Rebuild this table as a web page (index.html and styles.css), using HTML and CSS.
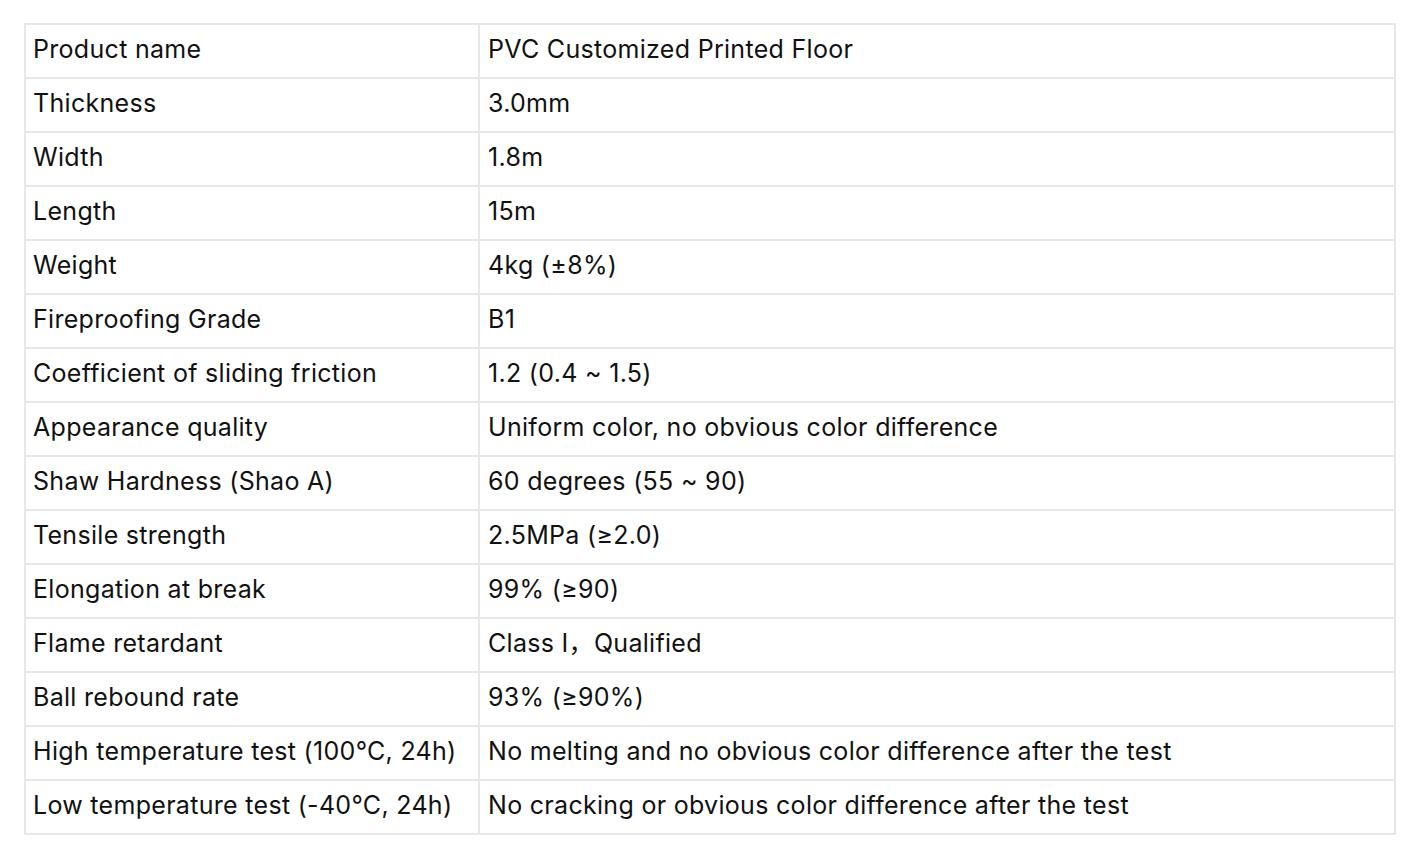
FILE: index.html
```html
<!DOCTYPE html>
<html lang="en">
<head>
<meta charset="utf-8">
<title>PVC Customized Printed Floor</title>
<link rel="stylesheet" href="styles.css">
</head>
<body>
<table class="spec">
<tbody>
<tr><td class="key">Product name</td><td>PVC Customized Printed Floor</td></tr>
<tr><td class="key">Thickness</td><td>3.0mm</td></tr>
<tr><td class="key">Width</td><td>1.8m</td></tr>
<tr><td class="key">Length</td><td>15m</td></tr>
<tr><td class="key">Weight</td><td>4kg (±8%)</td></tr>
<tr><td class="key">Fireproofing Grade</td><td>B1</td></tr>
<tr><td class="key">Coefficient of sliding friction</td><td>1.2 (0.4 ~ 1.5)</td></tr>
<tr><td class="key">Appearance quality</td><td>Uniform color, no obvious color difference</td></tr>
<tr><td class="key">Shaw Hardness (Shao A)</td><td>60 degrees (55 ~ 90)</td></tr>
<tr><td class="key">Tensile strength</td><td>2.5MPa (≥2.0)</td></tr>
<tr><td class="key">Elongation at break</td><td>99% (≥90)</td></tr>
<tr><td class="key">Flame retardant</td><td>Class I，Qualified</td></tr>
<tr><td class="key">Ball rebound rate</td><td>93% (≥90%)</td></tr>
<tr><td class="key">High temperature test (100°C, 24h)</td><td>No melting and no obvious color difference after the test</td></tr>
<tr><td class="key">Low temperature test (-40°C, 24h)</td><td>No cracking or obvious color difference after the test</td></tr>
</tbody>
</table>
</body>
</html>
```
FILE: styles.css
```css
html, body {
  margin: 0;
  padding: 0;
  background: #ffffff;
}
body {
  padding: 23px 24px 24px 24px;
  font-family: Inter, "Noto Sans CJK SC", "Liberation Sans", sans-serif;
  font-size: 25px;
  letter-spacing: 0.3px;
  color: #111111;
}
.spec {
  width: 1372px;
  border-collapse: collapse;
  table-layout: fixed;
}
.spec td {
  border: 2px solid #e8e8e8;
  padding: 10px 8px 14px 8px;
  line-height: 28px;
  white-space: nowrap;
  text-align: left;
  vertical-align: middle;
}
.spec td.key {
  width: 454px;
  padding-left: 7px;
  box-sizing: border-box;
}
```
